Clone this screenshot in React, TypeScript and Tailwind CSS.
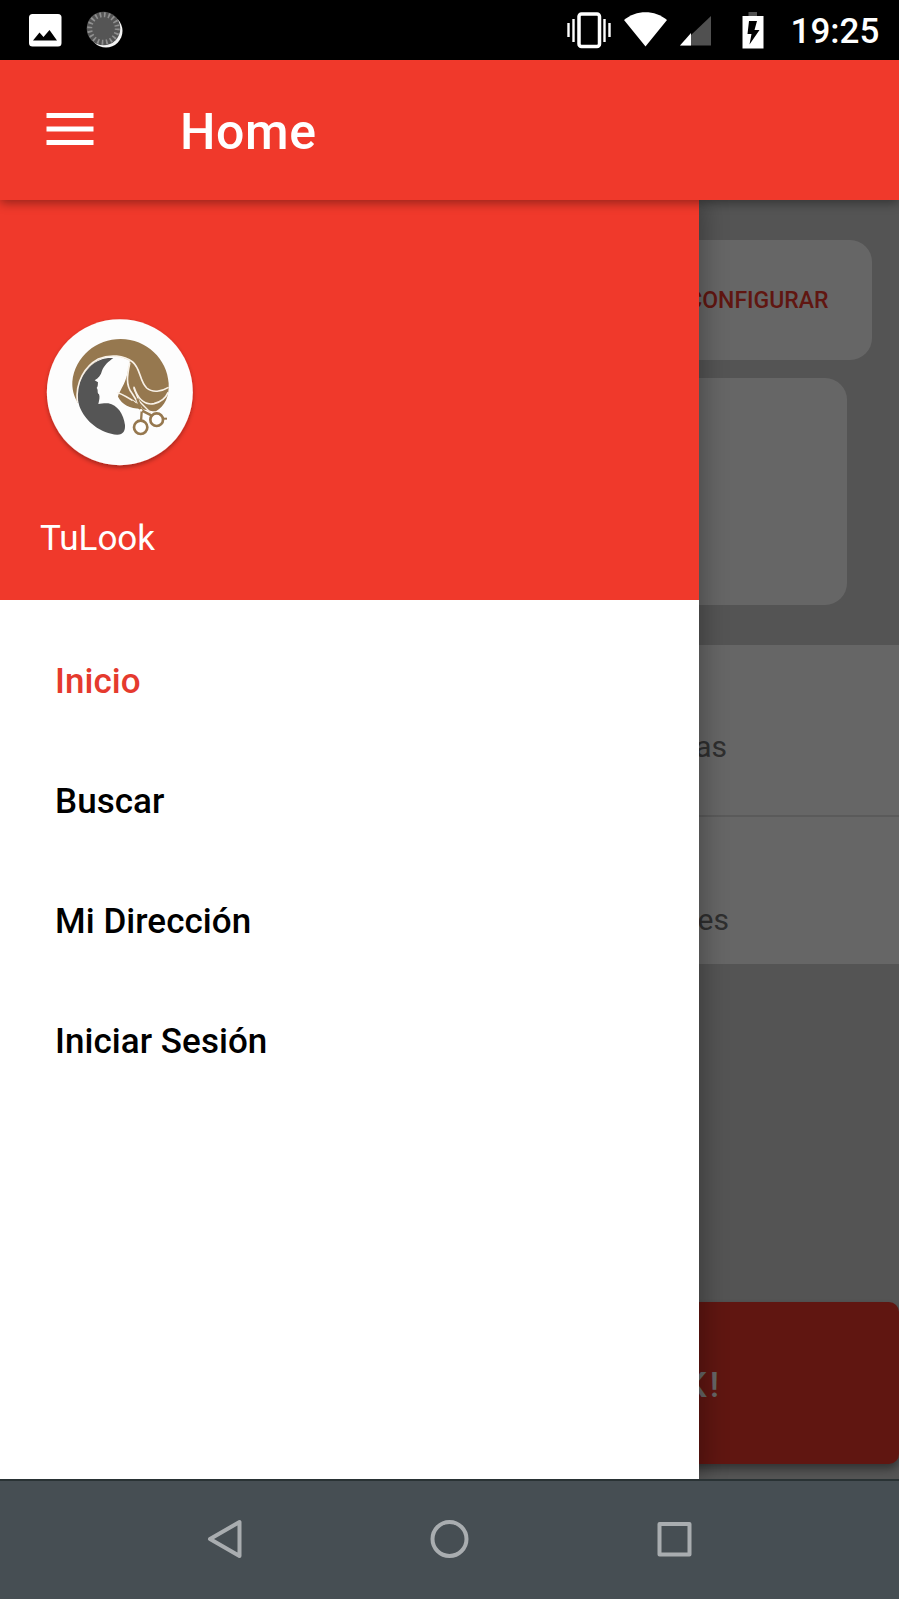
const Logo = () => (
  <svg className="block size-[190px]" viewBox="0 0 570 570" fill="none">
    <defs>
      <filter id="lift" x="-20%" y="-20%" width="140%" height="140%">
        <feDropShadow dx="0" dy="7" stdDeviation="6" floodColor="#000" floodOpacity="0.32" />
      </filter>
    </defs>
    <circle cx="269.5" cy="276.5" r="219" fill="#fdfdfd" filter="url(#lift)" />
    <path d="M144 310C130 285 126 265 127 245C135 168 200 117 272 117C350 117 412 178 416 250C418 290 405 318 378 334C365 334 350 330 332 326C300 326 276 314 264 290C266 276 284 256 292 222L300 182C266 162 228 164 200 183C160 210 138 255 144 310Z" fill="#96784f" />
    <path d="M250 174C225 172 202 180 184 196C148 230 134 275 148 318C164 364 214 402 262 404C280 404 286 392 285 375C281 342 262 315 235 310C222 309 213 312 205 312C208 300 210 290 207 283C200 279 206 270 200 264C205 258 203 252 204 247L194 241C206 234 213 225 216 212C222 196 236 184 250 174Z" fill="#555" />
    <g stroke="#f8f1e7" strokeWidth="5" strokeLinecap="round">
      <path d="M142 305C136 245 165 199 205 177C240 162 282 166 308 186C332 205 328 243 350 264C367 279 395 275 414 263" />
      <path d="M299 190C292 225 286 255 306 280L336 328" />
      <path d="M312 262C324 298 346 316 372 311C394 306 407 294 414 278" />
      <path d="M264 278C285 286 300 296 318 308" />
      <path d="M312 266L328 304L362 338" strokeWidth="4" />
    </g>
    <g stroke="#96784f" strokeWidth="8">
      <path d="M322 296L335 336L333 364M306 304L342 335L364 346" strokeWidth="7" />
      <circle cx="332" cy="382" r="20" fill="#fff" />
      <circle cx="380" cy="359" r="19" fill="#fff" />
      <path d="M399 356H411" strokeWidth="6" />
    </g>
    <circle cx="333" cy="331" r="4" fill="#fff" />
  </svg>
);

const StatusBar = () => (
  <div className="flex h-[60px] shrink-0 items-center bg-black text-white">
    <svg className="h-[60px] w-[140px]" viewBox="0 0 140 60">
      <rect x="29" y="14" width="32.5" height="32.5" rx="3.5" fill="#fff" />
      <path d="M33 40.500L39.500 32.500L43.500 37L49.500 30L57 40.500Z" fill="#000" />
      <circle cx="106" cy="31" r="16.500" fill="#f4f4f4" />
      <circle cx="103.500" cy="28.500" r="16.800" fill="#555" />
      <circle cx="103.500" cy="28.500" r="13.800" fill="none" stroke="#909090" strokeWidth="5" strokeDasharray="1.700 2.635" />
    </svg>
    <svg className="ml-auto h-[60px] w-[219px]" viewBox="560 0 219 60">
      <rect x="579" y="14" width="20.500" height="32.500" rx="2.500" fill="none" stroke="#fff" strokeWidth="3.500" />
      <path d="M568.500 23V37M573.500 19V42M604.500 19V42M609.500 23V37" stroke="#fff" strokeWidth="2.400" />
      <path d="M624 20C636 9.500 655 9.500 667 20L645.500 46.500Z" fill="#fff" />
      <path d="M711 16V45.500H680Z" fill="#505050" />
      <path d="M691 33V45.500H680Z" fill="#fff" />
      <path d="M748.500 12H757V17H748.500Z" fill="#505050" />
      <path d="M742.500 16H763.500V48.500H742.500Z" fill="#fff" />
      <path d="M749 21H757L754.500 30H759.500L749.500 44.500L751.500 34H747.500Z" fill="#000" />
    </svg>
    <span className="mr-5 w-[100px] pl-[11.5px] pt-1 text-[35px] font-medium leading-[60px]">19:25</span>
  </div>
);

const AppBar = () => (
  <header className="relative z-20 flex h-[140px] shrink-0 items-center bg-[#f0392b] text-white shadow-[0_3px_10px_rgba(0,0,0,0.38)]">
    <svg className="mb-[2px] ml-[46px] block h-8 w-12" viewBox="0 0 48 32">
      <path d="M.5 2.500H47.500M.5 16H47.500M.5 29.500H47.500" stroke="#fff" strokeWidth="5" />
    </svg>
    <h1 className="ml-[86px] pt-1 text-[50px] font-medium leading-[60px] tracking-[0.6px]">Home</h1>
  </header>
);

const Backdrop = () => (
  <main className="flex h-full flex-col bg-[#d2d2d2] pt-10">
    <section className="flex h-[120px] w-[871.5px] items-center justify-end rounded-[22px] bg-white pt-[3px] pr-[43px] text-[23px] font-medium text-[#f0392b]">
      CONFIGURAR
    </section>
    <section className="mt-[17.5px] h-[227px] w-[846.5px] rounded-[22px] bg-white" />
    <section className="mt-10 bg-white text-[30px] leading-9 text-[#757575]">
      <div className="h-[172.500px] border-b-2 border-[#e2e2e2] pt-[84px]">
        <p className="w-[727px] text-right">as</p>
      </div>
      <div className="h-[146.500px] pt-[85px]">
        <p className="w-[729px] text-right">es</p>
      </div>
    </section>
    <div className="mt-auto mb-[15px] flex h-[162px] items-center rounded-[10px] bg-[#f0392b] pt-[6px] text-[35px] font-medium text-white shadow-[0_5px_8px_rgba(0,0,0,0.4)]">
      <span className="w-[722px] text-right tracking-[3px]">K!</span>
    </div>
  </main>
);

const items = ["Inicio", "Buscar", "Mi Dirección", "Iniciar Sesión"];

const Drawer = () => (
  <aside className="absolute inset-y-0 left-0 z-10 w-[699.4px] bg-white shadow-[4px_0_24px_rgba(0,0,0,0.3)]">
    <div className="h-[399.500px] bg-[#f0392b] pt-[100px]">
      <div className="pl-[30px]">
        <Logo />
      </div>
      <p className="pt-[28px] pl-10 text-[35px] leading-[42px] text-white">TuLook</p>
    </div>
    <nav className="pt-[22px] tracking-[0.05px]">
      {items.map((item, i) => (
        <a
          key={item}
          className={
            i === 0
              ? "block pl-[55px] text-[35px] leading-[120px] font-medium text-[#e53a2e]"
              : "block pl-[55px] text-[35px] leading-[120px] font-medium text-black"
          }
        >
          {item}
        </a>
      ))}
    </nav>
  </aside>
);

const NavigationBar = () => (
  <footer className="relative z-30 flex h-[120px] shrink-0 items-center justify-center border-t-2 border-[#293234] bg-[#464e53] pr-[1px] pb-[2px]">
    <svg className="h-10 w-[520px]" viewBox="189 1519 520 40" fill="none" stroke="#a9adb0" strokeWidth="4" strokeLinejoin="round">
      <path d="M239.500 1522V1556L210 1539Z" />
      <circle cx="449.500" cy="1539" r="17" />
      <rect x="659.500" y="1524" width="30" height="30.500" />
    </svg>
  </footer>
);

export default function App() {
  return (
    <div className="flex h-[1599px] w-[899px] flex-col overflow-hidden font-['Roboto',sans-serif]">
      <StatusBar />
      <AppBar />
      <div className="relative min-h-0 flex-1 overflow-hidden">
        <Backdrop />
        <div className="absolute inset-0 bg-black/60" />
        <Drawer />
      </div>
      <NavigationBar />
    </div>
  );
}
